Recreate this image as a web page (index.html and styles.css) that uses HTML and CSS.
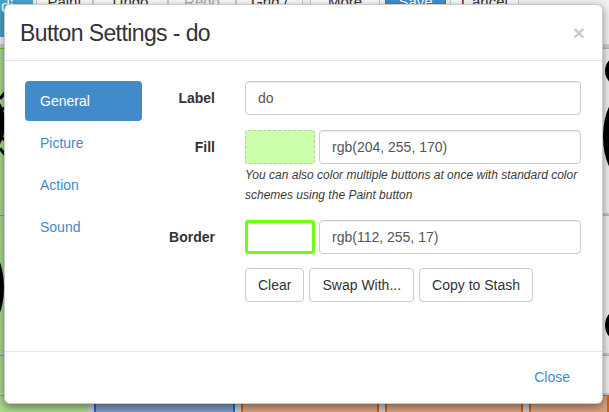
FILE: index.html
```html
<!DOCTYPE html>
<html>
<head>
<meta charset="utf-8">
<title>Button Settings</title>
<link rel="stylesheet" href="styles.css">
</head>
<body>
<div class="app">
  <div class="toolbar">
    <div class="logo">di</div>
    <div class="tb tb-paint">Paint</div>
    <div class="tb tb-undo">Undo</div>
    <div class="tb tb-redo">Redo</div>
    <div class="tb tb-grid">Grid /</div>
    <div class="tb tb-more">More</div>
    <div class="tb tb-save">Save</div>
    <div class="tb tb-cancel">Cancel</div>
    <div class="tb-rest"></div>
  </div>
  <div class="board">
    <div class="brow brow-1">
      <div class="cell cell-green cell-left">
        <svg class="art" viewBox="0 0 88 165" preserveAspectRatio="none">
          <ellipse cx="-8" cy="75" rx="13" ry="26" fill="#000"/>
          <path d="M0 50 L8 40 M0 100 L8 110 M0 62 L10 56 M0 88 L10 95" stroke="#000" stroke-width="3" fill="none"/>
        </svg>
      </div>
      <div class="cell cell-white cell-mid"></div>
      <div class="cell cell-gray cell-right">
        <svg class="art" viewBox="0 0 110 165" preserveAspectRatio="none">
          <ellipse cx="118" cy="22" rx="12" ry="14" fill="#000"/>
          <ellipse cx="124" cy="88" rx="20" ry="42" fill="#000"/>
        </svg>
      </div>
    </div>
    <div class="brow brow-2">
      <div class="cell cell-green cell-left">
        <svg class="art" viewBox="0 0 88 138" preserveAspectRatio="none">
          <ellipse cx="-18" cy="72" rx="22" ry="44" fill="#000"/>
        </svg>
      </div>
      <div class="cell cell-white cell-mid"></div>
      <div class="cell cell-gray cell-right">
        <svg class="art" viewBox="0 0 110 138" preserveAspectRatio="none">
          <ellipse cx="120" cy="110" rx="14" ry="16" fill="#000"/>
        </svg>
      </div>
    </div>
    <div class="brow brow-3">
      <div class="cell cell-green cell-left"></div>
      <div class="cell cell-white cell-mid"></div>
      <div class="cell cell-gray cell-right"></div>
    </div>
    <div class="brow brow-4">
      <div class="cell cell-green cell-b1"></div>
      <div class="cell cell-blue cell-b2"></div>
      <div class="cell cell-brown cell-b3"></div>
      <div class="cell cell-brown cell-b3"></div>
      <div class="cell cell-brown cell-b4"></div>
    </div>
  </div>
</div>

<div class="modal">
  <div class="modal-header">
    <h4 class="modal-title">Button Settings - do</h4>
    <button class="close" type="button">×</button>
  </div>
  <div class="modal-body">
    <ul class="nav-pills">
      <li class="active"><a>General</a></li>
      <li><a>Picture</a></li>
      <li><a>Action</a></li>
      <li><a>Sound</a></li>
    </ul>
    <form class="settings">
      <label class="ctl-label">Label</label>
      <div class="ctl"><input class="input" type="text" value="do"></div>

      <label class="ctl-label">Fill</label>
      <div class="ctl">
        <div class="color-row">
          <span class="swatch swatch-fill"></span>
          <input class="input" type="text" value="rgb(204, 255, 170)">
        </div>
        <p class="help">You can also color multiple buttons at once with standard color<br>schemes using the Paint button</p>
      </div>

      <label class="ctl-label">Border</label>
      <div class="ctl">
        <div class="color-row">
          <span class="swatch swatch-border"></span>
          <input class="input" type="text" value="rgb(112, 255, 17)">
        </div>
      </div>

      <div class="ctl ctl-actions">
        <button class="btn" type="button">Clear</button>
        <button class="btn" type="button">Swap With...</button>
        <button class="btn" type="button">Copy to Stash</button>
      </div>
    </form>
  </div>
  <div class="modal-footer">
    <a class="btn-link">Close</a>
  </div>
</div>
</body>
</html>
```

FILE: styles.css
```css
* { box-sizing: border-box; }

html, body {
  margin: 0;
  padding: 0;
}

body {
  width: 609px;
  height: 412px;
  overflow: hidden;
  position: relative;
  font-family: "Liberation Sans", Arial, sans-serif;
  font-size: 14px;
  line-height: 20px;
  color: #333;
  background: #dcdcdc;
}

/* ---------- background app ---------- */
.app {
  display: flex;
  flex-direction: column;
  height: 412px;
}

.toolbar {
  display: flex;
  align-items: flex-start;
  height: 46px;
  background: #f1f1f1;
  border-bottom: 2px solid #cfcfcf;
  flex: none;
}

.logo {
  width: 33px;
  height: 37px;
  background: #4aa3c9;
  color: #fff;
  font-size: 16px;
  line-height: 14px;
  padding-left: 1px;
  overflow: hidden;
  flex: none;
}

.tb {
  height: 20px;
  margin-top: -9px;
  line-height: 20px;
  text-align: center;
  font-size: 15px;
  color: #333;
  background: #f8f8f8;
  border: 1px solid #c8c8c8;
  flex: none;
}

.tb-paint { width: 57px; margin-left: 3px; }
.tb-undo { width: 75px; }
.tb-redo { width: 68px; color: #aaa; }
.tb-grid { width: 67px; }
.tb-more { width: 70px; margin-left: 7px; }
.tb-save { width: 61px; margin-left: 5px; background: #428bca; border-color: #357ebd; color: #fff; }
.tb-cancel { width: 69px; margin-left: 4px; }
.tb-rest { flex: 1; }

.board {
  flex: 1;
  display: flex;
  flex-direction: column;
  gap: 2px;
  padding-top: 2px;
  background: #c9c9c9;
}

.brow { display: flex; gap: 6px; }
.brow-1 { height: 165px; }
.brow-2 { height: 138px; }
.brow-3 { height: 38px; }
.brow-4 { flex: 1; }

.cell { position: relative; overflow: hidden; }
.cell-left { width: 88px; }
.cell-mid { flex: 1; }
.cell-right { width: 110px; }

.cell-green { background: #a9d98c; border-top: 1px solid #62c81c; }
.cell-white { background: #fafafa; }
.cell-gray { background: #ececec; border-top: 1px solid #b5b5b5; }
.cell-blue { background: #7f9ccb; border-left: 2px solid #1f5fd0; border-right: 2px solid #1f5fd0; }
.cell-brown { background: #d9a37e; border-top: 1px solid #e06a10; border-left: 2px solid #d2600e; border-right: 2px solid #d2600e; }

.cell-b1 { width: 88px; }
.cell-b2 { width: 141px; }
.cell-b3 { width: 138px; }
.cell-b4 { flex: 1; }

.art { display: block; width: 100%; height: 100%; }

/* ---------- modal ---------- */
.modal {
  position: absolute;
  left: 4px;
  top: 4px;
  width: 599px;
  background: #fff;
  border: 1px solid rgba(0, 0, 0, 0.2);
  border-radius: 6px;
  box-shadow: 0 3px 9px rgba(0, 0, 0, 0.45);
}

.modal-header {
  display: flex;
  justify-content: space-between;
  align-items: center;
  padding: 15px 17px 14px 15px;
  border-bottom: 1px solid #e5e5e5;
}

.modal-title {
  margin: 0;
  font-size: 23px;
  line-height: 26px;
  font-weight: normal;
  letter-spacing: -0.6px;
  color: #333;
}

.close {
  padding: 0;
  margin: 0 0 2px 0;
  border: 0;
  background: transparent;
  font-family: "Liberation Sans", Arial, sans-serif;
  font-size: 21px;
  font-weight: bold;
  line-height: 1;
  color: #000;
  opacity: 0.2;
}

.modal-body {
  display: flex;
  padding: 20px 21px 49px 20px;
}

.nav-pills {
  list-style: none;
  margin: 0;
  padding: 0;
  width: 117px;
  flex: none;
  display: flex;
  flex-direction: column;
  gap: 2px;
}

.nav-pills a {
  display: block;
  padding: 10px 15px;
  border-radius: 4px;
  color: #428bca;
  font-size: 14px;
  line-height: 20px;
}

.nav-pills .active a {
  background: #428bca;
  color: #fff;
}

.settings {
  display: grid;
  grid-template-columns: 73px 336px;
  column-gap: 30px;
  row-gap: 15px;
  align-items: start;
}

.ctl-label {
  padding-top: 7px;
  text-align: right;
  font-weight: bold;
  line-height: 20px;
  color: #333;
}

.ctl { min-width: 0; }

.ctl-actions {
  grid-column: 2;
  display: flex;
  gap: 5px;
  margin-top: -1px;
}

.input {
  display: block;
  width: 100%;
  height: 34px;
  padding: 6px 12px;
  font-family: "Liberation Sans", Arial, sans-serif;
  font-size: 14px;
  line-height: 20px;
  color: #555;
  background: #fff;
  border: 1px solid #ccc;
  border-radius: 4px;
  box-shadow: inset 0 1px 1px rgba(0, 0, 0, 0.075);
}

.color-row {
  display: flex;
  gap: 4px;
}

.color-row .input { flex: 1; }

.swatch {
  display: block;
  width: 70px;
  height: 34px;
  flex: none;
  border-radius: 3px;
}

.swatch-fill {
  background: rgb(204, 255, 170);
  border: 1px dashed #b4cfa2;
}

.swatch-border {
  background: #fff;
  border: 3px solid rgb(112, 255, 17);
}

.help {
  margin: 1px 0 0 0;
  font-size: 12px;
  line-height: 20px;
  font-style: italic;
  color: #3a3a3a;
  white-space: nowrap;
}

.btn {
  height: 34px;
  padding: 6px 12px;
  font-family: "Liberation Sans", Arial, sans-serif;
  font-size: 14px;
  line-height: 20px;
  color: #333;
  background: #fff;
  border: 1px solid #ccc;
  border-radius: 4px;
}

.modal-footer {
  display: flex;
  justify-content: flex-end;
  padding: 8px 20px 9px;
  border-top: 1px solid #e5e5e5;
}

.btn-link {
  display: block;
  padding: 7px 12px;
  line-height: 20px;
  color: #428bca;
  font-size: 14px;
}
```
